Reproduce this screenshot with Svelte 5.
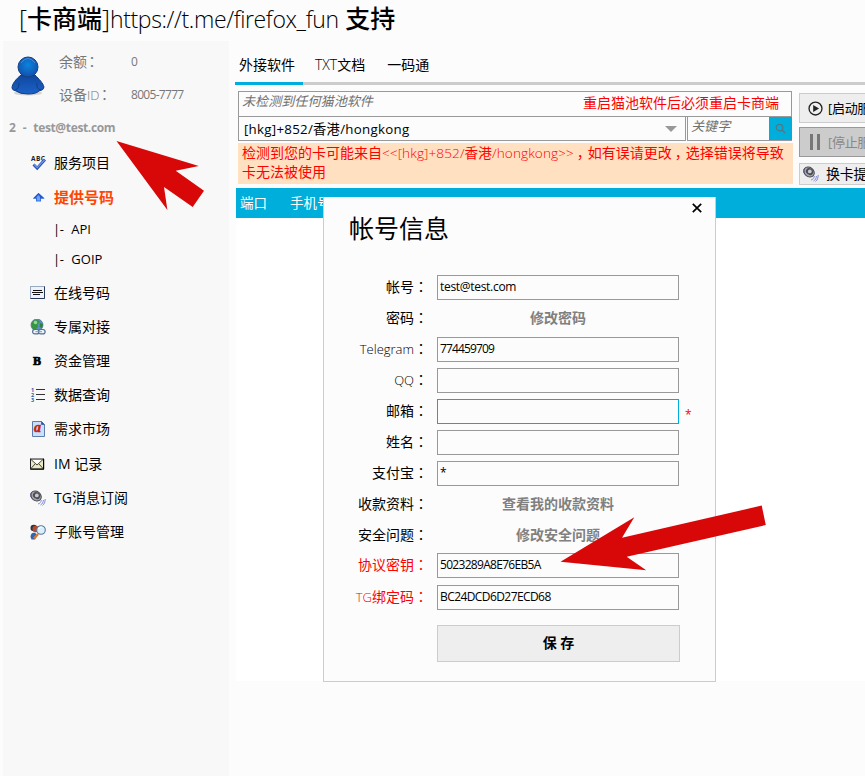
<script lang="ts">
  type MenuItem = { icon: string; label: string; active?: boolean; children?: string[] };
  type Field = {
    latin?: string;
    label: string;
    value?: string;
    link?: string;
    spacing?: string;
    required?: boolean;
    warn?: boolean;
  };

  const menu: MenuItem[] = [
    { icon: "spell", label: "服务项目" },
    { icon: "up", label: "提供号码", active: true, children: ["API", "GOIP"] },
    { icon: "text", label: "在线号码" },
    { icon: "globe", label: "专属对接" },
    { icon: "bold", label: "资金管理" },
    { icon: "list", label: "数据查询" },
    { icon: "doc", label: "需求市场" },
    { icon: "mail", label: "IM 记录" },
    { icon: "speaker", label: "TG消息订阅" },
    { icon: "users", label: "子账号管理" },
  ];

  const fields: Field[] = [
    { label: "帐号", value: "test@test.com", spacing: "-0.3px" },
    { label: "密码", link: "修改密码" },
    { latin: "Telegram", label: "", value: "774459709", spacing: "-0.85px" },
    { latin: "QQ", label: "", value: "" },
    { label: "邮箱", value: "", required: true },
    { label: "姓名", value: "" },
    { label: "支付宝", value: "*" },
    { label: "收款资料", link: "查看我的收款资料" },
    { label: "安全问题", link: "修改安全问题" },
    { label: "协议密钥", value: "5023289A8E76EB5A", warn: true },
    { latin: "TG", label: "绑定码", value: "BC24DCD6D27ECD68", spacing: "-0.58px", warn: true },
  ];
</script>

{#snippet icon(name: string)}
  <svg class="icon" viewBox="0 0 16 16" width="16" height="16" aria-hidden="true">
    {#if name === "spell"}
      <text x="1" y="5.5" font-size="6.5" font-weight="700" textLength="14" fill="#222">ABC</text>
      <path d="M3.5 9.5 7.2 13.2 15 4.5" fill="none" stroke="#274fb0" stroke-width="2.8" />
      <path d="M4 9.5 7.2 12.6 14.6 4.8" fill="none" stroke="#6d96ea" stroke-width="1.3" />
    {:else if name === "up"}
      <path d="M8.5 4 14.5 9.5H11V12.5H6V9.5H3Z" fill="#3b74e0" />
      <path d="M8.5 4 14.5 9.5H3Z" fill="#2459cf" />
      <path d="M6 8.8 8.5 6 10 8V11.5H7V8.8Z" fill="#6ea3f5" />
    {:else if name === "text"}
      <rect x="0.5" y="1.5" width="14" height="12" fill="#eef3fb" stroke="#9aa9c2" />
      <path d="M14.5 1.5V13.5H0.5" fill="none" stroke="#273a5e" />
      <path d="M3 5.5H12M2 7.5H13M3 9.5H10" stroke="#111" />
    {:else if name === "globe"}
      <circle cx="7" cy="6" r="6" fill="#5b8fbf" stroke="#41698f" stroke-width=".7" />
      <path d="M4 1.5 8 1 10 3 7.5 5 8 8 5 11 2 9 1.5 4Z" fill="#37953f" />
      <path d="M10 4 13 5 12 9 9.5 8Z" fill="#2e8739" />
      <circle cx="5.5" cy="3.5" r="1.8" fill="#b8efaa" opacity=".75" />
      <rect x="2.6" y="10.5" width="6.6" height="4.4" rx="2.2" fill="#eef4fa" stroke="#54708f" stroke-width="1.2" />
      <rect x="8.5" y="10.5" width="6.6" height="4.4" rx="2.2" fill="#eef4fa" stroke="#54708f" stroke-width="1.2" />
      <path d="M5.5 12.7H12" stroke="#7f97b2" />
    {:else if name === "bold"}
      <text x="3" y="11.5" font-size="12" font-family="Liberation Serif, serif" font-weight="700" stroke="#000" stroke-width=".7">B</text>
    {:else if name === "list"}
      <g font-size="5.5" font-weight="700" fill="#3559a8">
        <text x="1" y="5.2">1</text>
        <text x="1" y="10.1">2</text>
        <text x="1" y="15">3</text>
      </g>
      <path d="M6 2.5H15M6 7.5H15M6 12.5H15" stroke="#333" />
    {:else if name === "doc"}
      <path d="M2.5 .5H11.5L14.5 3.5V15.5H2.5Z" fill="#c9e0fa" stroke="#5d7cac" />
      <path d="M11.5 .5V3.5H14.5" fill="#2d5496" stroke="#2d5496" stroke-width=".7" />
      <text x="4" y="11" font-size="14" font-family="Liberation Serif, serif" font-style="italic" font-weight="700" fill="#c8200d" stroke="#c8200d" stroke-width=".5">a</text>
    {:else if name === "mail"}
      <rect x=".5" y="3" width="13" height="10" fill="#e9e9c4" stroke="#222" />
      <path d="M.5 3 7 9 13.5 3M.5 13 5 8M13.5 13 9 8" fill="none" stroke="#333" stroke-width=".9" />
      <path d="M2.5 4H11.5L7 8Z" fill="#fff" />
      <path d="M.5 13.2H13.7V3" fill="none" stroke="#000" />
    {:else if name === "speaker"}
      <ellipse cx="6" cy="6" rx="5.6" ry="4.6" transform="rotate(38 6 6)" fill="#a5a5ac" stroke="#45454e" />
      <ellipse cx="6.6" cy="5.6" rx="3.8" ry="3.2" transform="rotate(38 6.6 5.6)" fill="#4c4c54" />
      <circle cx="6.8" cy="5.4" r="1.9" fill="#c9c9ce" />
      <path d="M1 3V7" stroke="#5458a8" />
      <path d="M8 14C10 13.5 11 12 11.3 10M10.5 15C12.5 14 13.3 12 13.4 10M12.5 15.5C14.5 14 15 12 15.2 9" fill="none" stroke="#8288d2" stroke-width="1" />
    {:else if name === "users"}
      <circle cx="3.8" cy="4" r="3.3" fill="#30343e" />
      <path d="M.5 13C.5 9 3 8 5.5 9L7 12 5 15.5 1.5 15.5Z" fill="#2e63b6" />
      <circle cx="5.7" cy="5" r="3.2" fill="#b54b2c" />
      <path d="M8 10 4 14.5" stroke="#d37a35" stroke-width="2.5" />
      <circle cx="11" cy="6" r="4.3" fill="#d9effc" stroke="#55749c" stroke-width="1.1" />
      <path d="M8.5 5Q9.5 3 12 3.2" fill="none" stroke="#fff" stroke-width="1.2" />
    {/if}
  </svg>
{/snippet}

<div class="window">
  <h1>[<b>卡商端</b>]<span class="url">https://t.me/firefox_fun</span> <b>支持</b></h1>

  <div class="body">
    <aside>
      <div class="profile">
        <svg class="avatar" viewBox="0 0 34 40" width="34" height="40" aria-hidden="true">
          <defs>
            <radialGradient id="head" cx=".5" cy=".4" r=".6">
              <stop offset="0" stop-color="#0c84dc" />
              <stop offset="1" stop-color="#1150ae" />
            </radialGradient>
            <linearGradient id="torso" x1="0" y1="0" x2="0" y2="1">
              <stop offset="0" stop-color="#0f479f" />
              <stop offset="1" stop-color="#1b62c8" />
            </linearGradient>
          </defs>
          <ellipse cx="17" cy="37" rx="14" ry="2.6" fill="#bbb" opacity=".6" />
          <path d="M10 19C5 23 1 28 1 32Q1 34 5 35Q9 38 17 38Q25 38 28 35Q33 34 33 31C32 27 28 23 24 19Z" fill="url(#torso)" stroke="#153c7d" />
          <path d="M8 27Q8 33 4 34M26 27Q25 33 30 34" fill="none" stroke="#133d83" />
          <circle cx="17" cy="11" r="10" fill="url(#head)" stroke="#174080" />
          <path d="M10 7Q13 2.5 17 2.5T24 7" fill="none" stroke="#5c92d8" stroke-width=".8" />
        </svg>
        <dl>
          <dt>余额<i class="colon">：</i></dt>
          <dd>0</dd>
          <dt>设备<span class="latin">ID</span><i class="colon">：</i></dt>
          <dd>8005-7777</dd>
        </dl>
      </div>
      <p class="account">2&nbsp; -&nbsp; test@test.com</p>

      <nav>
        {#each menu as item}
          <div class="item" class:active={item.active}>
            {@render icon(item.icon)}
            <span>{item.label}</span>
          </div>
          {#if item.children}
            <div class="children">
              {#each item.children as child}
                <div class="child"><span>|-</span>{child}</div>
              {/each}
            </div>
          {/if}
        {/each}
      </nav>
    </aside>

    <main>
      <div class="tabs">
        <span class="tab selected">外接软件</span>
        <span class="tab light">TXT<b>文档</b></span>
        <span class="tab">一码通</span>
      </div>

      <div class="tools">
        <div class="source">
          <div class="status">
            <em>未检测到任何猫池软件</em>
            <span>重启猫池软件后必须重启卡商端</span>
          </div>
          <div class="search">
            <div class="select">
              <span>[hkg]+852/香港/hongkong</span>
              <svg viewBox="0 0 12 6" width="12" height="6" aria-hidden="true"><path d="M0 0H12L6 6Z" fill="#999" /></svg>
            </div>
            <div class="keyword">
              <em>关键字</em>
              <button type="button" aria-label="搜索">
                <svg viewBox="0 0 12 12" width="11" height="11" aria-hidden="true">
                  <circle cx="5" cy="5" r="3.6" fill="none" stroke="#4b7a88" stroke-width="1.3" />
                  <path d="M7.6 7.6 11 11" stroke="#4b7a88" stroke-width="1.5" />
                </svg>
              </button>
            </div>
          </div>
          <p class="warning">
            检测到您的卡可能来自<span class="region">&lt;&lt;[hkg]+852/<b>香港</b>/hongkong&gt;&gt;</span><i class="comma">，</i>如有误请更改<i class="comma">，</i>选择错误将导致卡无法被使用
          </p>
        </div>

        <div class="controls">
          <button type="button" class="start">
            <svg viewBox="0 0 16 16" width="15" height="15" aria-hidden="true">
              <circle cx="8" cy="8" r="6.9" fill="none" stroke="#222" stroke-width="1.4" />
              <path d="M5.5 4.3 11.8 8 5.5 11.7Z" fill="#222" />
            </svg>
            <span>[启动服务]</span>
          </button>
          <button type="button" class="stop" disabled>
            <svg viewBox="0 0 12 16" width="12" height="16" aria-hidden="true"><path d="M1 0H4V16H1ZM8 0H11V16H8Z" fill="#777" /></svg>
            <span>[停止服务]</span>
          </button>
          <button type="button" class="swap">
            {@render icon("speaker")}
            <span>换卡提醒</span>
          </button>
        </div>
      </div>

      <div class="table">
        <div class="thead"><span>端口</span><span>手机号码</span></div>
      </div>
    </main>
  </div>

  <section class="dialog">
    <button type="button" class="close" aria-label="关闭">
      <svg viewBox="0 0 10 10" width="10" height="10" aria-hidden="true"><path d="M.8 .8 9.2 9.2M9.2 .8 .8 9.2" stroke="#000" stroke-width="1.7" /></svg>
    </button>
    <h2>帐号信息</h2>
    <form>
      {#each fields as field}
        <div class="row" class:warn={field.warn}>
          <span class="label">{#if field.latin}<span class="latin">{field.latin}</span>{/if}{field.label}<i class="colon">：</i></span>
          {#if field.link}
            <span class="link">{field.link}</span>
          {:else}
            <span class="input" class:focused={field.required} style:letter-spacing={field.spacing}>{field.value}</span>
          {/if}
          {#if field.required}
            <span class="star">*</span>
          {/if}
        </div>
      {/each}
      <button type="button" class="save">保 存</button>
    </form>
  </section>

  <svg class="arrows" viewBox="0 0 865 776" width="865" height="776" aria-hidden="true">
    <g fill="#d90808">
      <path d="M116.5 141 198.8 166 175.7 170.7 204 190.7 192.7 207 164 187 167.4 210Z" />
      <path d="M560.5 561.8 634.3 517.2 622 537.8 761.7 505.6 765.8 525 626.7 556.8 646.2 570.2Z" />
    </g>
  </svg>
</div>

<style>
  :global(body) {
    margin: 0;
    background: #fcfcfc;
  }

  .window {
    position: relative;
    width: 865px;
    height: 776px;
    overflow: hidden;
    background: #fcfcfc;
    color: #000;
    font-family: "Open Sans", "Noto Sans CJK SC", sans-serif;
    font-size: 14px;
    line-height: 20px;
    white-space: nowrap;
  }

  h1,
  h2,
  p,
  dl,
  dd {
    margin: 0;
  }

  button {
    margin: 0;
    padding: 0;
    border: 0;
    border-radius: 0;
    background: none;
    color: inherit;
    font: inherit;
  }

  b {
    font-weight: 400;
  }

  .colon {
    font-family: "Noto Sans CJK TC", sans-serif;
    font-style: normal;
  }

  .latin {
    font-size: 13px;
    font-weight: 300;
  }

  h1 {
    height: 41px;
    padding-left: 19px;
    box-sizing: border-box;
    font-size: 25px;
    font-weight: 300;
    line-height: 36px;
  }

  h1 b {
    font-weight: 500;
  }

  .url {
    font-size: 23px;
    letter-spacing: -0.37px;
  }

  .body {
    display: flex;
    height: 735px;
  }

  aside {
    width: 226px;
    margin-left: 3px;
    background: #f8f8f8;
    flex: none;
  }

  .profile {
    display: flex;
    height: 77px;
    padding: 4px 0 0 8px;
    box-sizing: border-box;
  }

  .avatar {
    margin-top: 11px;
  }

  dl {
    display: grid;
    grid-template-columns: 72px auto;
    grid-auto-rows: 33px;
    margin-left: 14px;
    color: #777;
    line-height: 33px;
  }

  dt .colon {
    position: relative;
    left: -2px;
  }

  dd {
    font-size: 12px;
    letter-spacing: -0.7px;
  }

  .account {
    padding-left: 6px;
    color: #999;
    font-size: 12px;
    font-weight: 700;
    letter-spacing: -0.35px;
    word-spacing: 0.8px;
    height: 28px;
  }

  .item {
    display: flex;
    align-items: center;
    gap: 8px;
    height: 34.15px;
    padding-left: 27px;
  }

  .active {
    color: #ff4500;
    font-size: 15px;
    font-weight: 700;
  }

  .children {
    margin-bottom: 1.5px;
  }

  .child {
    display: flex;
    align-items: center;
    gap: 8px;
    height: 30px;
    padding-left: 50px;
    font-size: 13px;
  }

  .child span {
    letter-spacing: -0.5px;
  }

  main {
    flex: 1;
    min-width: 0;
    padding-left: 6px;
  }

  .tabs {
    display: flex;
    gap: 12px;
    height: 44px;
    box-sizing: border-box;
    border-bottom: 3px solid #ccc;
  }

  .tab {
    height: 41px;
    padding: 0 4px;
    line-height: 48px;
    border-bottom: 3px solid transparent;
  }

  .selected {
    padding-right: 8px;
    margin-right: -4px;
    border-color: #00aedb;
  }

  .light {
    font-weight: 300;
    padding-right: 6px;
  }

  .tools {
    display: flex;
    gap: 6px;
    height: 103px;
    padding: 6px 0 0 3px;
    box-sizing: border-box;
  }

  .source {
    width: 555px;
    flex: none;
  }

  .status {
    display: flex;
    justify-content: space-between;
    width: 554px;
    height: 26px;
    padding: 0 12px 0 3px;
    box-sizing: border-box;
    border: 1px solid #999;
    color: #f00;
    line-height: 22px;
  }

  em {
    color: #707070;
    font-size: 13.1px;
    line-height: 18px;
  }

  .search {
    display: flex;
    gap: 1px;
    width: 554px;
    height: 25px;
    margin-top: -1px;
  }

  .select {
    display: flex;
    align-items: center;
    justify-content: space-between;
    width: 448px;
    box-sizing: border-box;
    padding: 0 8px 0 5px;
    border: 1px solid #999;
    font-size: 13.3px;
    letter-spacing: 0.27px;
  }

  .keyword {
    display: flex;
    justify-content: space-between;
    width: 105px;
    box-sizing: border-box;
    padding-left: 3px;
    border: 1px solid #999;
    border-right: 0;
  }

  .keyword button {
    display: grid;
    place-items: center;
    width: 23px;
    background: #00aedb;
  }

  .warning {
    height: 41px;
    margin-top: 2px;
    padding: 0 4px;
    box-sizing: border-box;
    background: #ffe0c0;
    color: #f00;
    line-height: 19px;
    white-space: normal;
    word-break: break-all;
  }

  .region {
    font-size: 13.6px;
    font-weight: 300;
    letter-spacing: 0.09px;
  }

  .comma {
    position: relative;
    left: 3px;
    font-style: normal;
  }

  .controls {
    width: 110px;
    flex: none;
    padding-top: 2px;
  }

  .controls button {
    display: flex;
    align-items: center;
    width: 110px;
    height: 30px;
    box-sizing: border-box;
    border: 1px solid #ccc;
    background: #eee;
    font-size: 13px;
    letter-spacing: -0.3px;
  }

  .controls .start {
    gap: 5px;
    padding-left: 8px;
  }

  .controls .stop {
    gap: 7px;
    margin-top: 4px;
    padding-left: 9px;
    border-color: #999;
    background: #ccc;
    color: #888;
  }

  .controls .swap {
    gap: 7px;
    height: 22px;
    margin-top: 6px;
    padding-left: 3px;
    font-size: 14px;
  }

  .table {
    height: 493px;
    margin-left: 1px;
    background: #fff;
  }

  .thead {
    display: flex;
    gap: 23px;
    height: 30px;
    padding-left: 4px;
    background: #00aedb;
    color: #fff;
    font-size: 13.5px;
    line-height: 30px;
  }

  .dialog {
    position: absolute;
    left: 323px;
    top: 197px;
    width: 393px;
    height: 485px;
    box-sizing: border-box;
    border: 1px solid #ccc;
    border-top: 0;
    background: #fcfcfc;
  }

  .close {
    position: absolute;
    top: 6px;
    right: 13px;
    width: 10px;
    height: 10px;
    line-height: 0;
  }

  h2 {
    height: 78px;
    box-sizing: border-box;
    padding: 11px 0 0 25px;
    font-size: 25px;
    font-weight: 400;
    line-height: 40px;
  }

  .row {
    display: flex;
    align-items: flex-start;
    height: 31px;
  }

  .row:nth-child(10) {
    height: 32px;
    margin-top: -1px;
  }

  .label {
    width: 104px;
    margin-right: 9px;
    line-height: 22px;
    text-align: right;
  }

  .input {
    width: 242px;
    height: 25px;
    box-sizing: border-box;
    padding-left: 2px;
    border: 1px solid #999;
    font-size: 12px;
    letter-spacing: -0.7px;
    line-height: 21px;
  }

  .focused {
    border-color: #00aedb;
  }

  .star {
    margin-left: 6px;
    color: #f00;
    font-size: 12px;
    line-height: 31px;
  }

  .link {
    width: 242px;
    color: #808080;
    font-weight: 700;
    line-height: 24px;
    text-align: center;
  }

  .warn .label {
    color: #f00;
  }

  .save {
    display: block;
    width: 243px;
    height: 37px;
    margin: 9px 0 0 113px;
    padding-bottom: 2px;
    border: 1px solid #ccc;
    background: #eee;
    font-weight: 700;
  }

  .arrows {
    position: absolute;
    inset: 0;
    pointer-events: none;
  }
</style>
